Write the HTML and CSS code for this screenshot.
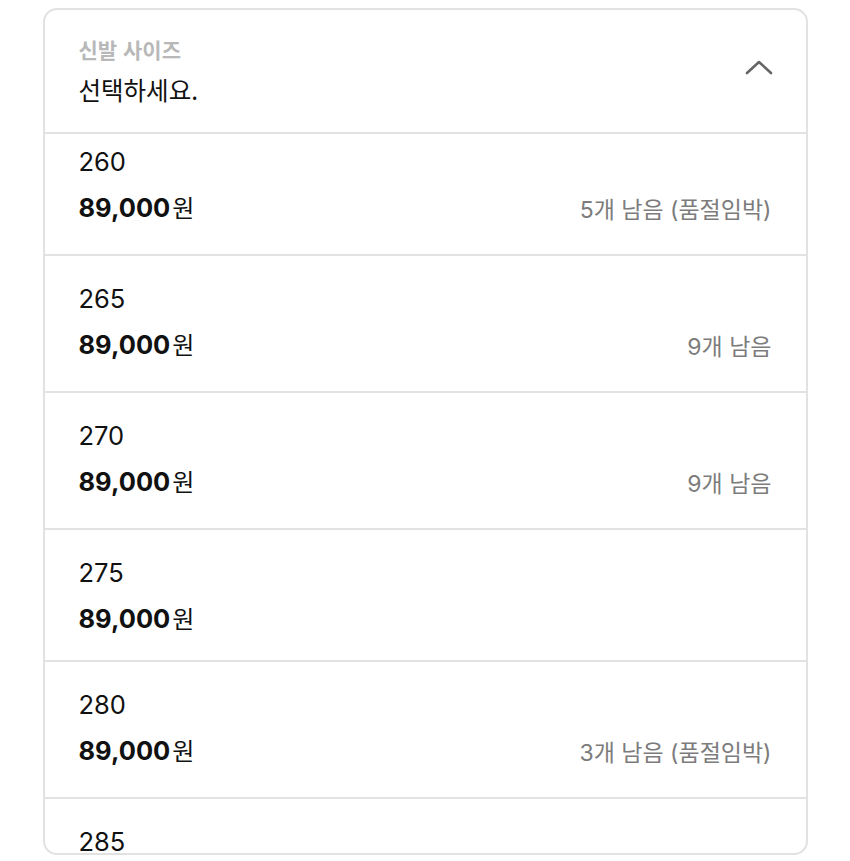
FILE: index.html
```html
<!DOCTYPE html>
<html lang="ko">
<head>
  <meta charset="UTF-8" />
  <meta name="viewport" content="width=device-width, initial-scale=1" />
  <title>신발 사이즈 선택</title>
  <link rel="stylesheet" href="styles.css">
</head>
<body>
  <div class="select-box">
    <header class="select-head">
      <div class="select-text">
        <p class="select-label">신발 사이즈</p>
        <p class="select-value">선택하세요.</p>
      </div>
      <svg class="chevron" width="28" height="16" viewBox="0 0 28 16" aria-hidden="true">
        <path d="M2 14 L14 3 L26 14" fill="none" stroke="#666" stroke-width="2.6" stroke-linecap="round" stroke-linejoin="round" />
      </svg>
    </header>

    <div class="option-scroll">
      <ul class="option-list">
        <li class="option">
          <span class="size">260</span>
          <div class="option-row">
            <span class="price">89,000<span class="won">원</span></span>
            <span class="stock">5개 남음 (품절임박)</span>
          </div>
        </li>
        <li class="option">
          <span class="size">265</span>
          <div class="option-row">
            <span class="price">89,000<span class="won">원</span></span>
            <span class="stock">9개 남음</span>
          </div>
        </li>
        <li class="option">
          <span class="size">270</span>
          <div class="option-row">
            <span class="price">89,000<span class="won">원</span></span>
            <span class="stock">9개 남음</span>
          </div>
        </li>
        <li class="option">
          <span class="size">275</span>
          <div class="option-row">
            <span class="price">89,000<span class="won">원</span></span>
          </div>
        </li>
        <li class="option">
          <span class="size">280</span>
          <div class="option-row">
            <span class="price">89,000<span class="won">원</span></span>
            <span class="stock">3개 남음 (품절임박)</span>
          </div>
        </li>
        <li class="option">
          <span class="size">285</span>
          <div class="option-row">
            <span class="price">89,000<span class="won">원</span></span>
          </div>
        </li>
      </ul>
    </div>
  </div>
</body>
</html>
```

FILE: styles.css
```css
* {
  margin: 0;
  padding: 0;
  box-sizing: border-box;
}

html, body {
  background: #fff;
  font-family: Inter, "Noto Sans CJK KR", sans-serif;
  color: #111;
}

body {
  padding-top: 8px;
}

.select-box {
  width: 765px;
  height: 847px;
  margin: 0 auto;
  border: 2px solid #e2e2e2;
  border-radius: 14px;
  overflow: hidden;
  display: flex;
  flex-direction: column;
}

.select-head {
  display: flex;
  align-items: center;
  justify-content: space-between;
  padding: 26px 33px 26px 34px;
  border-bottom: 2px solid #e2e2e2;
  flex-shrink: 0;
}

.select-label {
  font-family: "Noto Sans CJK KR", sans-serif;
  font-size: 21px;
  font-weight: 700;
  line-height: 26px;
  color: #b8b8b8;
}

.select-value {
  font-family: "Noto Sans CJK KR", sans-serif;
  font-size: 24.5px;
  line-height: 32px;
  margin-top: 12px;
  color: #111;
}

.chevron {
  margin-top: -8px;
}

.option-scroll {
  flex: 1;
  overflow: hidden;
}

.option-list {
  list-style: none;
  margin-top: -15px;
}

.option {
  display: flex;
  flex-direction: column;
  gap: 15px;
  padding: 28px 34px 26px;
  border-bottom: 2px solid #e2e2e2;
}

.size {
  font-size: 25.5px;
  line-height: 30px;
}

.option-row {
  display: flex;
  align-items: flex-start;
  justify-content: space-between;
}

.price {
  font-size: 25.5px;
  font-weight: 700;
  line-height: 30px;
}

.won {
  font-family: "Noto Sans CJK KR", sans-serif;
  font-size: 24px;
  font-weight: 400;
  margin-left: 2px;
}

.stock {
  font-size: 23px;
  line-height: 36px;
  color: #7c7c7c;
}
```
